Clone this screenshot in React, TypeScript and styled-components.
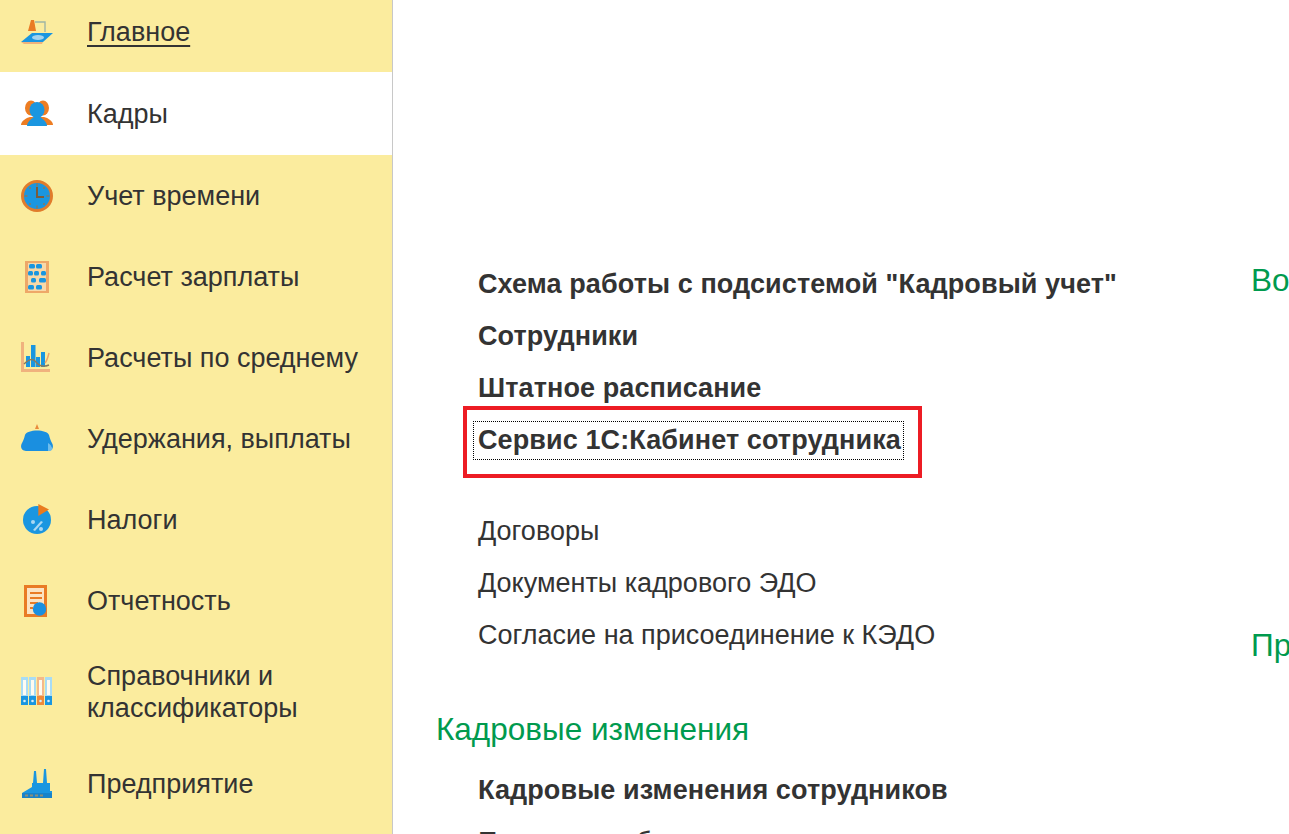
import React from 'react';
import styled, { createGlobalStyle } from 'styled-components';

const GlobalStyle = createGlobalStyle`
  html, body {
    margin: 0;
    padding: 0;
    background: #fff;
    overflow: hidden;
  }
  body {
    font-family: "Liberation Sans", Arial, sans-serif;
    color: #333;
  }
`;

const Page = styled.div`
  display: flex;
  width: 1289px;
  height: 834px;
  overflow: hidden;
`;

const SideBar = styled.nav`
  flex: 0 0 392px;
  background: #fbec9e;
  border-right: 1px solid #c8c8c8;
`;

const Menu = styled.ul`
  list-style: none;
  margin: -9px 0 0;
  padding: 0;
`;

const MenuItem = styled.li<{ $selected?: boolean }>`
  display: flex;
  align-items: center;
  gap: 34px;
  min-height: ${(p) => (p.$selected ? 83 : 81)}px;
  box-sizing: border-box;
  padding: 19px 0 19px 21px;
  background: ${(p) => (p.$selected ? '#fff' : 'transparent')};
`;

const MenuIcon = styled.svg`
  flex: 0 0 32px;
  width: 32px;
  height: 32px;
`;

const MenuLabel = styled.span<{ $underlined?: boolean }>`
  max-width: 280px;
  font-size: 27px;
  line-height: 32px;
  color: #333;
  text-decoration: ${(p) => (p.$underlined ? 'underline' : 'none')};
  text-decoration-thickness: 2px;
  text-underline-offset: 4px;
`;

const Content = styled.main`
  flex: 1;
  display: flex;
  min-width: 0;
  overflow: hidden;
`;

const MainColumn = styled.section`
  flex: 0 0 858px;
  padding-top: 258px;
  padding-left: 43px;
  box-sizing: border-box;
`;

const SideColumn = styled.section`
  flex: 0 0 auto;
  padding-top: 254px;
`;

const Links = styled.ul`
  list-style: none;
  margin: 0;
  padding: 0 0 0 42px;
`;

const SpacedLinks = styled(Links)`
  margin-top: 39px;
`;

const LinkRow = styled.li<{ $bold?: boolean }>`
  height: 52px;
  line-height: 52px;
  font-size: 27px;
  letter-spacing: ${(p) => (p.$bold ? '0.1px' : '0')};
  white-space: nowrap;
  font-weight: ${(p) => (p.$bold ? 700 : 400)};
  color: #333;
`;

const FocusLink = styled.span`
  position: relative;
  display: inline-block;
  line-height: 39px;
  padding: 0 3px 0 5px;
  margin-left: -5px;
  outline: 1px dotted #000;
  outline-offset: -1px;

  &::after {
    content: '';
    position: absolute;
    left: -10px;
    right: -18px;
    top: -15px;
    bottom: -18px;
    border: 4px solid #ed1c24;
  }
`;

const SectionTitle = styled.h2`
  margin: 0;
  height: 52px;
  line-height: 52px;
  font-size: 31.5px;
  font-weight: 400;
  color: #009a4e;
  white-space: nowrap;
`;

const MainTitle = styled(SectionTitle)`
  margin: 42px 0 9px;
`;

const LowerTitle = styled(SectionTitle)`
  margin-top: 313px;
`;

const HomeIcon = () => (
  <MenuIcon viewBox="0 0 32 32">
    <path d="M14 6h10v10" fill="none" stroke="#9fb5a5" strokeWidth="1.400" />
    <path d="M7 15l3-11h3l2 11z" fill="#e97b25" />
    <path d="M0 26l11-9h21l-10 9z" fill="#1a96e0" />
    <ellipse cx="17" cy="21.500" rx="6" ry="2.500" fill="#a3d3ee" />
    <path d="M0 26h22l-1 2H3z" fill="#efb27c" />
  </MenuIcon>
);

const StaffIcon = () => (
  <MenuIcon viewBox="0 0 32 32">
    <ellipse cx="10" cy="10" rx="6" ry="7.500" fill="#ed7d23" />
    <ellipse cx="22" cy="10" rx="6" ry="7.500" fill="#ed7d23" />
    <path d="M0 27c0-4 5-7 9-8h14c4 1 9 4 9 8z" fill="#ed7d23" />
    <ellipse cx="16" cy="12" rx="7.500" ry="8" fill="#1a96e0" />
    <path d="M6 28c0-4 4-7 7-9h6c3 2 7 5 7 9z" fill="#1a96e0" />
  </MenuIcon>
);

const ClockIcon = () => (
  <MenuIcon viewBox="0 0 32 32">
    <circle cx="16" cy="16" r="14.500" fill="#1a96e0" stroke="#e07c2c" strokeWidth="3" />
    <path d="M16 7v10h7" fill="none" stroke="#7a5c3c" strokeWidth="2" />
    <g fill="#6b7f80">
      <rect x="15" y="3.500" width="2" height="3" />
      <rect x="15" y="25.500" width="2" height="3" />
      <rect x="3.500" y="15" width="3" height="2" />
      <rect x="25.500" y="15" width="3" height="2" />
      <rect x="8" y="7" width="2" height="2" />
      <rect x="22" y="7" width="2" height="2" />
      <rect x="8" y="23" width="2" height="2" />
      <rect x="22" y="23" width="2" height="2" />
    </g>
  </MenuIcon>
);

const AbacusIcon = () => (
  <MenuIcon viewBox="0 0 32 32">
    <rect x="4" y="0" width="24" height="32" fill="#eea868" />
    <rect x="7" y="2" width="18" height="28" fill="#f8d9a8" />
    <g fill="#1a96e0">
      <rect x="8" y="3" width="6" height="4.500" rx="1.500" />
      <rect x="15" y="3" width="6" height="4.500" rx="1.500" />
      <rect x="7" y="10" width="5" height="4.500" rx="1.500" />
      <rect x="13" y="10" width="5" height="4.500" rx="1.500" />
      <rect x="20" y="10" width="5" height="4.500" rx="1.500" />
      <rect x="10" y="17" width="5" height="4.500" rx="1.500" />
      <rect x="18" y="17" width="7" height="4.500" rx="1.500" />
      <rect x="7" y="24" width="6" height="4.500" rx="1.500" />
      <rect x="15" y="24" width="6" height="4.500" rx="1.500" />
    </g>
  </MenuIcon>
);

const ChartIcon = () => (
  <MenuIcon viewBox="0 0 32 32">
    <path d="M1.500 0v28.500H29" fill="none" stroke="#f0b27e" strokeWidth="3" />
    <g fill="#1a96e0">
      <rect x="5" y="14" width="4" height="11" />
      <rect x="10" y="3" width="4.500" height="22" />
      <rect x="15" y="15" width="4" height="10" />
      <rect x="20" y="10" width="4" height="15" />
    </g>
    <path d="M3 22c5-5 9-6 12-2s8 5 13 3" fill="none" stroke="#8a7a5c" strokeWidth="1.400" />
    <path d="M24 21c2-2 3-6 4-10" fill="none" stroke="#eea56a" strokeWidth="1.500" />
  </MenuIcon>
);

const PurseIcon = () => (
  <MenuIcon viewBox="0 0 32 32">
    <path d="M14 6l2-5 2 5z" fill="#e98a3c" />
    <path d="M4 12C6 6 26 6 28 12c1 4 2 6 3.500 9 1.500 4-1 7-4.500 7H5C1.500 28-1 25 .500 21 2 18 3 16 4 12z" fill="#1a8fe0" />
    <path d="M27 20c2 1 3.500 3 4.500 6-1 2-3 2-4.500 2z" fill="#6fbdec" />
  </MenuIcon>
);

const PieIcon = () => (
  <MenuIcon viewBox="0 0 32 32">
    <circle cx="16" cy="16" r="14" fill="#1a96e0" />
    <path d="M17.300 0L28 5.500 17.300 12z" fill="#e97b1f" />
    <g fill="#a9d8f3">
      <circle cx="12" cy="18" r="2" />
      <circle cx="20" cy="25" r="2" />
      <path d="M20 17l2 1-8 9-2-1z" />
    </g>
  </MenuIcon>
);

const ReportIcon = () => (
  <MenuIcon viewBox="0 0 32 32">
    <rect x="3" y="0" width="23" height="32" fill="#e97b25" />
    <rect x="6" y="3" width="17" height="26" fill="#fbe3c3" />
    <g fill="#e97b25">
      <rect x="9" y="7" width="12" height="2" />
      <rect x="9" y="12" width="12" height="2" />
      <rect x="9" y="17" width="8" height="2" />
      <rect x="9" y="22" width="3" height="2" />
    </g>
    <circle cx="18.500" cy="24" r="6.700" fill="#1a8fe0" />
  </MenuIcon>
);

const BinderIcon = () => (
  <MenuIcon viewBox="0 0 32 32">
    {[0, 8, 16, 24].map((x, i) => {
      const tone = i === 2 ? '#ef8a3a' : '#1a96e0';
      return (
        <g key={x}>
          <rect x={x} y="1" width="7" height="28" fill={i === 2 ? '#f4b98a' : '#a8dcf5'} />
          <rect x={x + 2} y="4" width="3" height="15" fill="#fdfbf2" />
          <rect x={x} y="20" width="7" height="9" fill={tone} />
          <circle cx={x + 3.500} cy="25" r="1.300" fill="#d6ecf8" />
        </g>
      );
    })}
  </MenuIcon>
);

const FactoryIcon = () => (
  <MenuIcon viewBox="0 0 32 32">
    <path d="M12 15l1-12h2l1 12zM22 15l1-14h2l1 14z" fill="#1a96e0" />
    <path d="M11 15h18v8h2v7H1v-5l10-6z" fill="#1a96e0" />
    <path d="M1 25h30v5H1z" fill="#1883c9" />
    <g fill="#8a8f7a">
      <rect x="4" y="26.500" width="3" height="2" />
      <rect x="9" y="26.500" width="3" height="2" />
      <rect x="14" y="26.500" width="3" height="2" />
      <rect x="19" y="26.500" width="3" height="2" />
    </g>
  </MenuIcon>
);

const menu = [
  { label: 'Главное', icon: <HomeIcon />, underlined: true },
  { label: 'Кадры', icon: <StaffIcon />, selected: true },
  { label: 'Учет времени', icon: <ClockIcon /> },
  { label: 'Расчет зарплаты', icon: <AbacusIcon /> },
  { label: 'Расчеты по среднему', icon: <ChartIcon /> },
  { label: 'Удержания, выплаты', icon: <PurseIcon /> },
  { label: 'Налоги', icon: <PieIcon /> },
  { label: 'Отчетность', icon: <ReportIcon /> },
  { label: 'Справочники и классификаторы', icon: <BinderIcon /> },
  { label: 'Предприятие', icon: <FactoryIcon /> },
];

export default function App() {
  return (
    <>
      <GlobalStyle />
      <Page>
        <SideBar>
          <Menu>
            {menu.map((item) => (
              <MenuItem key={item.label} $selected={item.selected}>
                {item.icon}
                <MenuLabel $underlined={item.underlined}>{item.label}</MenuLabel>
              </MenuItem>
            ))}
          </Menu>
        </SideBar>
        <Content>
          <MainColumn>
            <Links>
              <LinkRow $bold>Схема работы с подсистемой "Кадровый учет"</LinkRow>
              <LinkRow $bold>Сотрудники</LinkRow>
              <LinkRow $bold>Штатное расписание</LinkRow>
              <LinkRow $bold>
                <FocusLink>Сервис 1С:Кабинет сотрудника</FocusLink>
              </LinkRow>
            </Links>
            <SpacedLinks>
              <LinkRow>Договоры</LinkRow>
              <LinkRow>Документы кадрового ЭДО</LinkRow>
              <LinkRow>Согласие на присоединение к КЭДО</LinkRow>
            </SpacedLinks>
            <MainTitle>Кадровые изменения</MainTitle>
            <Links>
              <LinkRow $bold>Кадровые изменения сотрудников</LinkRow>
              <LinkRow>Прием на работу</LinkRow>
            </Links>
          </MainColumn>
          <SideColumn>
            <SectionTitle>Во</SectionTitle>
            <LowerTitle>Пр</LowerTitle>
          </SideColumn>
        </Content>
      </Page>
    </>
  );
}
